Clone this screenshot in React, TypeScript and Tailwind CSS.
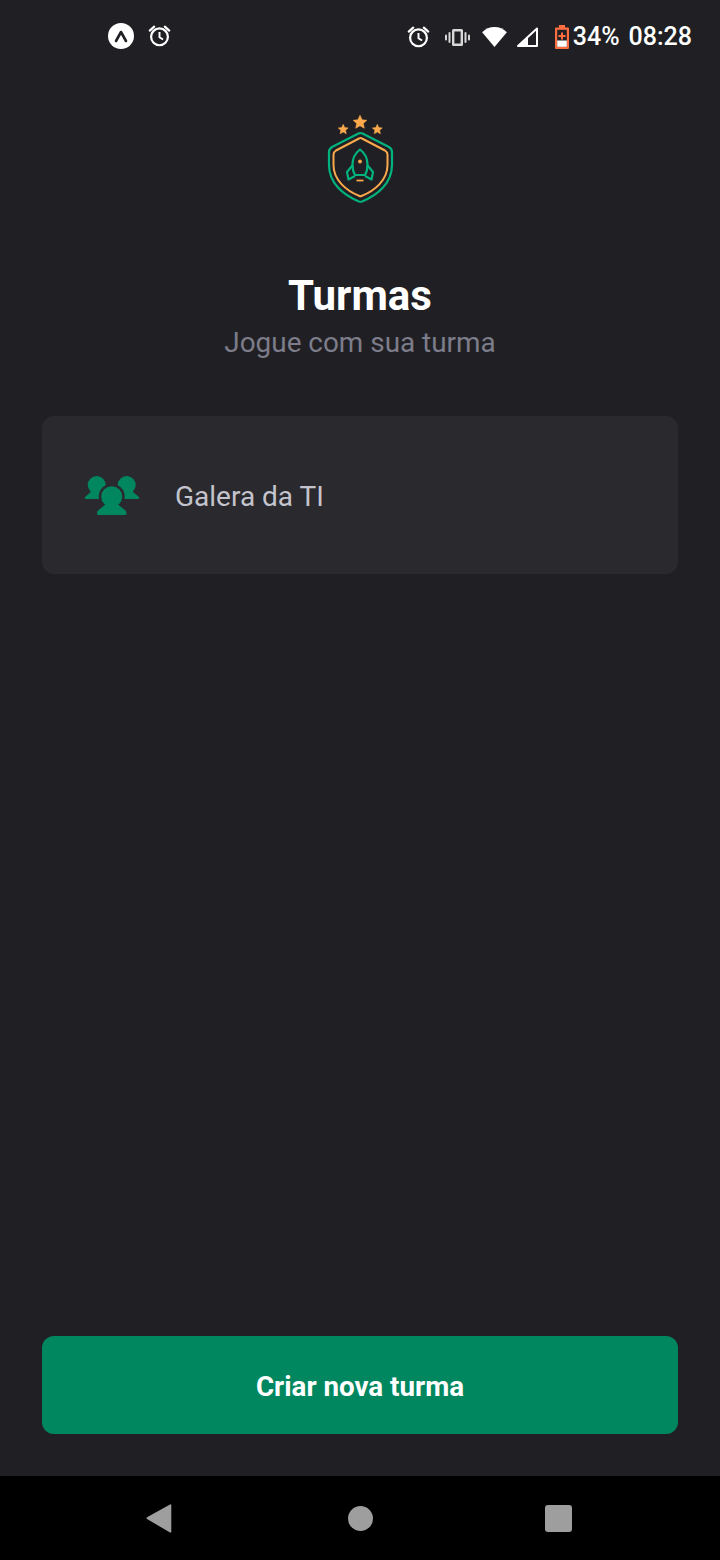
function AlarmIcon() {
  return (
    <svg width="23" height="23" viewBox="0 0 26 26" fill="none" stroke="#fff" strokeWidth="2.500">
      <circle cx="13" cy="14.500" r="9.500" />
      <path d="M13 9v6l4 2.500" strokeWidth="2.200" />
      <path d="M2 7.500 7 3M24 7.500 19 3" strokeLinecap="round" />
    </svg>
  )
}

function StatusBar() {
  return (
    <div className="flex h-[70px] items-start justify-between pt-[22px] pl-[108px] pr-[28px]">
      <div className="mt-[1px] flex items-center gap-[14px]">
        <div className="flex h-[26px] w-[26px] items-center justify-center rounded-full bg-white">
          <svg width="16" height="14" viewBox="0 0 16 14" fill="none" stroke="#202024" strokeWidth="2.600" strokeLinecap="round" strokeLinejoin="round">
            <path d="M3 12 8 3l5 9" />
          </svg>
        </div>
        <div className="-mt-[2px]">
          <AlarmIcon />
        </div>
      </div>
      <div className="flex items-center">
        <div className="-mt-[2px]">
          <AlarmIcon />
        </div>
        <svg className="ml-[15px]" width="25" height="17" viewBox="0 0 25 17" fill="#d8d8d8">
          <path fillRule="evenodd" d="M8.500 0h8A1.500 1.500 0 0 1 18 1.500v14a1.500 1.500 0 0 1-1.500 1.500h-8A1.500 1.500 0 0 1 7 15.500v-14A1.500 1.500 0 0 1 8.500 0Zm.9 2.400v12.200h6.200V2.400H9.400Z" />
          <rect x="3.500" y="3" width="2" height="11" rx="1" />
          <rect x="0" y="5.500" width="2" height="6" rx="1" />
          <rect x="19.500" y="3" width="2" height="11" rx="1" />
          <rect x="23" y="5.500" width="2" height="6" rx="1" />
        </svg>
        <svg className="ml-[12px]" width="25" height="20" viewBox="0 0 26 21" fill="#fff">
          <path d="M13 21 0 5.500C3.500 2 8 0 13 0s9.500 2 13 5.500L13 21Z" />
        </svg>
        <svg className="ml-[9px]" width="22" height="20" viewBox="0 0 22 20" fill="none">
          <path d="M21 1.500V19H2L21 1.500Z" stroke="#fff" strokeWidth="2" strokeLinejoin="round" />
          <path d="M12 10v9H2l10-9Z" fill="#fff" />
        </svg>
        <svg className="ml-[17px]" width="14" height="24" viewBox="0 0 14 24">
          <path d="M4 0h6v2.500h3a1 1 0 0 1 1 1V23a1 1 0 0 1-1 1H1a1 1 0 0 1-1-1V3.500a1 1 0 0 1 1-1h3V0Z" fill="#ff6e40" />
          <rect x="2.200" y="4.800" width="9.600" height="17" fill="#202024" />
          <rect x="2.200" y="15.500" width="9.600" height="6.300" fill="#fff" />
          <path d="M6 7.500h2V10h2.500v2H8v2.500H6V12H3.500v-2H6V7.500Z" fill="#ff6e40" />
        </svg>
        <span className="ml-[4px] text-[25px] leading-[30px] font-medium text-white">34%</span>
        <span className="ml-[9px] text-[25px] leading-[30px] font-medium text-white">08:28</span>
      </div>
    </div>
  )
}

function Logo() {
  return (
    <svg className="mx-auto mt-[35px]" width="100" height="105" viewBox="0 0 100 105" fill="none">
      <path d="m50 10.300 2.100 4.500 4.700.5-3.500 3.200 1 4.700-4.300-2.400-4.300 2.400 1-4.700-3.500-3.200 4.700-.5 2.100-4.500Z" fill="#FBA94C" stroke="#FBA94C" strokeWidth=".6" strokeLinejoin="round" />
      <path d="m33.200 19.300 1.500 3.200 3.500.4-2.600 2.400.7 3.500-3.100-1.700-3.100 1.700.7-3.500-2.600-2.400 3.500-.4 1.500-3.200Z" fill="#FBA94C" stroke="#FBA94C" strokeWidth=".5" strokeLinejoin="round" />
      <path d="m67.300 19.300 1.500 3.200 3.500.4-2.600 2.400.7 3.500-3.100-1.700-3.100 1.700.7-3.500-2.600-2.400 3.500-.4 1.500-3.200Z" fill="#FBA94C" stroke="#FBA94C" strokeWidth=".5" strokeLinejoin="round" />
      <path d="M48.500 28.500Q50.500 27.500 52.500 28.500L79 42Q82 44 82 47V60C82 78 68 90 52 96.500Q50.500 97 49 96.500C33 90 19 78 19 60V47Q19 44 22 42Z" stroke="#00B37E" strokeWidth="2.200" strokeLinejoin="round" />
      <path d="M49 33.500Q50.500 32.500 52 33.500L75 45.500Q77.500 47 77.500 49.500V60C77.500 75 65 85.500 51.500 91Q50.500 91.500 49.500 91C36 85.500 23.500 75 23.500 60V49.500Q23.500 47 26 45.500Z" stroke="#FBA94C" strokeWidth="2" strokeLinejoin="round" />
      <path d="M50 44.500c-4.500 3.500-7.500 9-7.500 15 0 4 1 8 2.500 10.500h10c1.500-2.500 2.500-6.500 2.500-10.500 0-6-3-11.500-7.500-15Z" stroke="#00B37E" strokeWidth="2.200" strokeLinejoin="round" />
      <path d="m42.800 60-5.800 7 1.500 7.500 6.500-3.500M57.200 60l5.800 7-1.500 7.500-6.500-3.500" stroke="#00B37E" strokeWidth="2.200" strokeLinejoin="round" />
      <circle cx="50" cy="56.500" r="1.900" fill="#FBA94C" />
      <path d="M46.500 75.500h7" stroke="#FBA94C" strokeWidth="1.800" />
    </svg>
  )
}

function GroupIcon() {
  return (
    <svg width="54" height="42" viewBox="0 0 54 42" fill="#00875F">
      <circle cx="11.700" cy="11" r="9" />
      <path d="M8 16 0 23c-.5 1.200 0 2 1.500 2H20v-9Z" />
      <circle cx="41.700" cy="11" r="9" />
      <path d="M45.500 16 54 23c.5 1.200 0 2-1.500 2H34v-9Z" />
      <circle cx="26.700" cy="22.700" r="13" fill="#29292E" />
      <path d="M19 30 10 37v4h34v-4L34.500 30Z" fill="#29292E" />
      <circle cx="26.700" cy="22.700" r="10.500" />
      <path d="M21 30 13 36.500c-1.500 2-1.500 4.500 1 4.500h26c2 0 2-2.500.5-4.500L32.500 30Z" />
    </svg>
  )
}

export default function App() {
  return (
    <div className="flex h-[1560px] w-[720px] flex-col bg-[#202024] font-['Roboto',sans-serif]">
      <StatusBar />
      <Logo />
      <main className="flex flex-1 flex-col px-[42px] pb-[42px]">
        <h1 className="mt-[60px] text-center text-[42px] leading-[52px] font-bold text-white">Turmas</h1>
        <p className="text-center text-[27.900px] leading-[42px] text-[#7C7C8A]">Jogue com sua turma</p>
        <div className="mt-[52px] flex h-[158px] items-center rounded-[12px] bg-[#29292E] pl-[43px]">
          <GroupIcon />
          <span className="ml-[36px] pt-[3px] text-[28px] text-[#C4C4CC]">Galera da TI</span>
        </div>
        <button className="mt-auto h-[98px] w-full rounded-[12px] bg-[#00875F] pt-[3px] text-[27.750px] font-bold text-white">
          Criar nova turma
        </button>
      </main>
      <nav className="flex h-[84px] items-center bg-black pl-[146px]">
        <svg width="26" height="30" viewBox="0 0 26 30" fill="#9e9e9e">
          <path d="M24 1.500c.6-.4 1.300 0 1.300.7v26.600c0 .7-.7 1.100-1.300.7L1 16c-.7-.4-.7-1.300 0-1.700L24 1.500Z" />
        </svg>
        <div className="ml-[176px] h-[25px] w-[25px] rounded-full bg-[#9e9e9e]" />
        <div className="ml-[172px] h-[27px] w-[27px] rounded-[3px] bg-[#9e9e9e]" />
      </nav>
    </div>
  )
}
